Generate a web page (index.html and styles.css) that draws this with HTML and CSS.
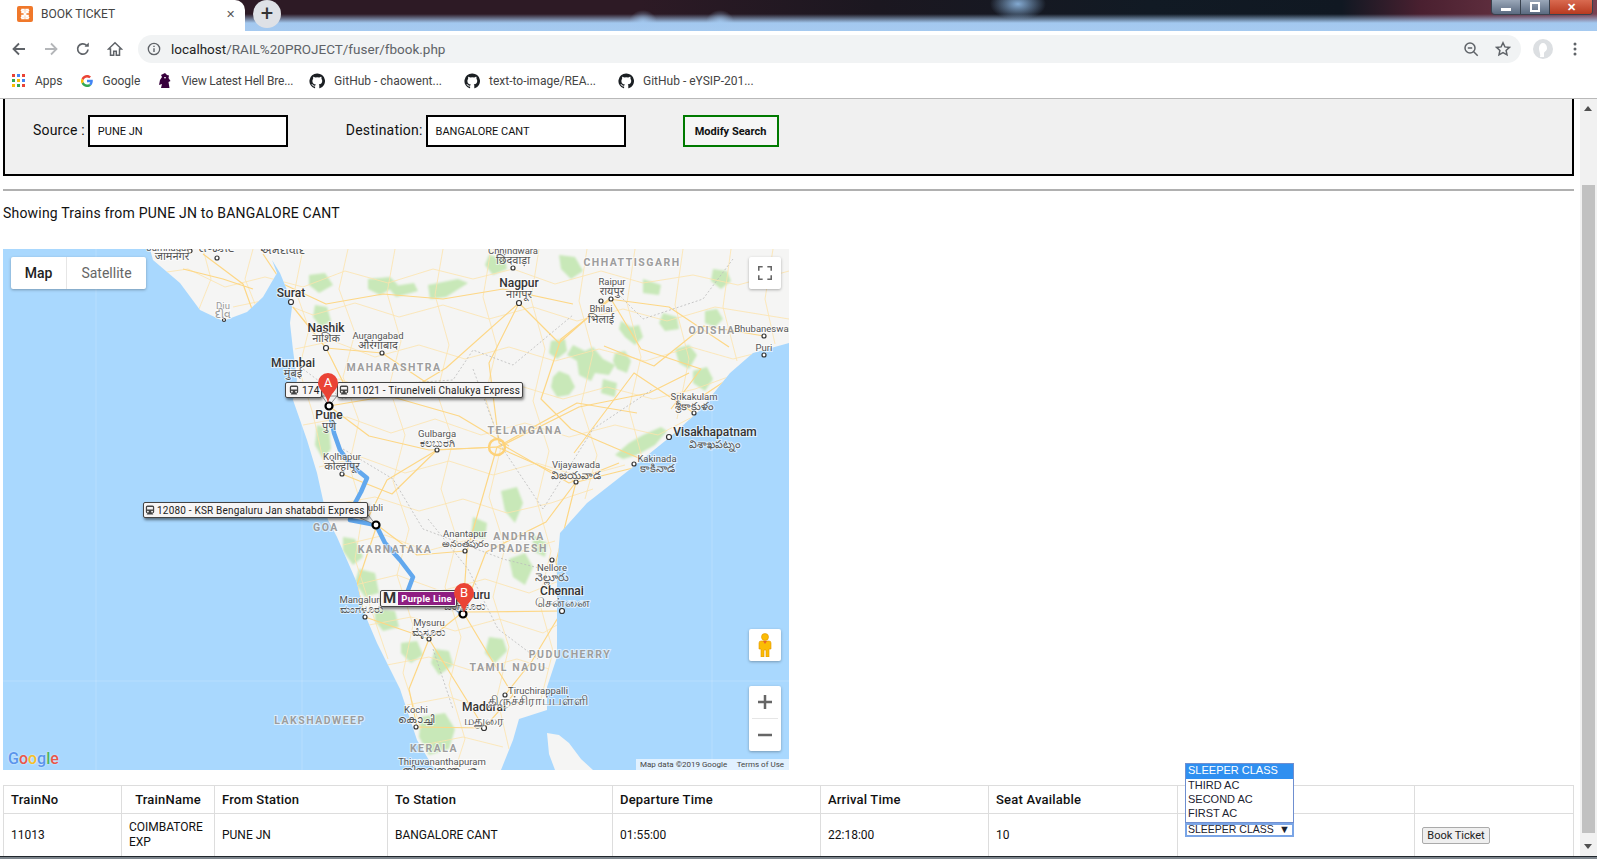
FILE: index.html
```html
<!DOCTYPE html>
<html lang="en">
<head>
  <meta charset="UTF-8" />
  <title>BOOK TICKET</title>
  <link rel="stylesheet" href="styles.css">
</head>
<body>
  <div class="tabstrip">
    <div class="tab">
      <svg class="favicon" viewBox="0 0 16 16"><rect width="16" height="16" rx="2" fill="#f0782a"/><path d="M4 4l8 8M12 4l-8 8M5 3.5h2v3H5zM9 3.5h2v3H9zM5 9.5h2v3H5zM9 9.5h2v3H9z" stroke="#fff" stroke-width="1.6" fill="none"/></svg>
      <span class="tab-title">BOOK TICKET</span>
      <span class="tab-close">&#10005;</span>
    </div>
    <div class="newtab">+</div>
    <div class="winbtns">
      <span class="winbtn"><i class="win-min"></i></span>
      <span class="winbtn"><i class="win-max"></i></span>
      <span class="winbtn win-close">&#10005;</span>
    </div>
  </div>

  <div class="toolbar">
    <div class="navs">
      <svg viewBox="0 0 16 16"><path d="M14 8H3M8 2.5L2.5 8 8 13.5" fill="none" stroke="#5f6368" stroke-width="1.8"/></svg>
      <svg viewBox="0 0 16 16"><path d="M2 8h11M8 2.5L13.5 8 8 13.5" fill="none" stroke="#b4b6b9" stroke-width="1.8"/></svg>
      <svg viewBox="0 0 16 16"><path d="M13 8.5a5.2 5.2 0 1 1-1.5-4.2" fill="none" stroke="#5f6368" stroke-width="1.7"/><path d="M13.8 1.5v4.3H9.5z" fill="#5f6368"/></svg>
      <svg viewBox="0 0 16 16"><path d="M8 1.8L1.5 8h2v6.2h3.200v-4h2.600v4h3.200V8h2z" fill="none" stroke="#5f6368" stroke-width="1.5"/></svg>
    </div>
    <div class="omnibox">
      <svg class="info" viewBox="0 0 16 16"><circle cx="8" cy="8" r="6.5" fill="none" stroke="#5f6368" stroke-width="1.5"/><path d="M8 7v4.5M8 4.3v1.5" stroke="#5f6368" stroke-width="1.6"/></svg>
      <span class="url"><b>localhost</b>/RAIL%20PROJECT/fuser/fbook.php</span>
      <svg class="omni-icon" viewBox="0 0 16 16"><circle cx="7" cy="7" r="5" fill="none" stroke="#5f6368" stroke-width="1.5"/><path d="M4.8 7h4.4M10.7 10.7l4 4" stroke="#5f6368" stroke-width="1.5"/></svg>
      <svg class="omni-icon" viewBox="0 0 16 16"><path d="M8 1.8l1.9 4.1 4.5.5-3.300 3 .9 4.400L8 11.600l-4 2.200.9-4.400-3.300-3 4.500-.5z" fill="none" stroke="#5f6368" stroke-width="1.5"/></svg>
    </div>
    <svg class="avatar" viewBox="0 0 20 20"><circle cx="10" cy="10" r="10" fill="#dcdfe2"/><path d="M7 18c1-3-1-5-1-9 0-3 2-5 4-5s4 2 4 5-2 3-3 5v4z" fill="#fff"/></svg>
    <svg class="menu" viewBox="0 0 4 16"><circle cx="2" cy="3" r="1.5" fill="#5f6368"/><circle cx="2" cy="8" r="1.5" fill="#5f6368"/><circle cx="2" cy="13" r="1.5" fill="#5f6368"/></svg>
  </div>

  <div class="bookmarks">
    <div class="bm bm-apps">
      <svg viewBox="0 0 14 14"><rect x="0" y="0" width="3" height="3" fill="#ea4335"/><rect x="5" y="0" width="3" height="3" fill="#4285f4"/><rect x="10" y="0" width="3" height="3" fill="#ea4335"/><rect x="0" y="5" width="3" height="3" fill="#34a853"/><rect x="5" y="5" width="3" height="3" fill="#fbbc05"/><rect x="10" y="5" width="3" height="3" fill="#4285f4"/><rect x="0" y="10" width="3" height="3" fill="#fbbc05"/><rect x="5" y="10" width="3" height="3" fill="#34a853"/><rect x="10" y="10" width="3" height="3" fill="#ea4335"/></svg>
      <span>Apps</span>
    </div>
    <div class="bm bm-google">
      <svg viewBox="0 0 14 14"><path d="M12.8 7.100c0-.5 0-.9-.1-1.300H7v2.500h3.300c-.2.800-.6 1.400-1.200 1.800l1.900 1.500c1.100-1 1.800-2.600 1.800-4.500z" fill="#4285f4"/><path d="M7 13c1.600 0 3-.5 4-1.500L9.100 10c-.5.400-1.200.6-2.100.6-1.600 0-2.900-1-3.400-2.500l-2 1.500C2.700 11.700 4.700 13 7 13z" fill="#34a853"/><path d="M3.600 8.100c-.2-.7-.2-1.500 0-2.200l-2-1.500c-.8 1.600-.8 3.600 0 5.200z" fill="#fbbc05"/><path d="M7 3.400c.9 0 1.700.3 2.300.9L11 2.600C10 1.600 8.600 1 7 1 4.700 1 2.700 2.300 1.600 4.400l2 1.500C4.100 4.400 5.400 3.400 7 3.400z" fill="#ea4335"/></svg>
      <span>Google</span>
    </div>
    <div class="bm bm-pl">
      <svg viewBox="0 0 14 16"><path d="M7 0l2 2 2 .5-.5 2.500 2 3-2 1 1 6H3l1-4-3 1 1-5 2-3-1-2z" fill="#38003c"/><path d="M6 4l2 0-1 2z" fill="#fff"/></svg>
      <span>View Latest Hell Bre...</span>
    </div>
    <div class="bm bm-gh">
      <svg viewBox="0 0 16 16"><path d="M8 .5a7.600 7.600 0 0 0-2.400 14.800c.4.100.5-.2.5-.4v-1.400c-2.100.5-2.600-.9-2.600-.9-.3-.9-.8-1.100-.8-1.100-.7-.5.100-.5.100-.5.800.1 1.200.8 1.200.8.700 1.200 1.800.8 2.300.6.100-.5.300-.8.500-1-1.700-.2-3.400-.8-3.400-3.700 0-.8.300-1.500.8-2-.1-.2-.3-1 .1-2 0 0 .6-.2 2.100.8a7.200 7.200 0 0 1 3.800 0c1.400-1 2.100-.8 2.100-.8.400 1 .2 1.800.1 2 .5.500.8 1.200.8 2 0 2.900-1.800 3.500-3.400 3.700.3.200.5.700.5 1.400v2.100c0 .2.100.5.500.4A7.600 7.600 0 0 0 8 .5z" fill="#1b1f23"/></svg>
      <span>GitHub - chaowent...</span>
    </div>
    <div class="bm bm-gh">
      <svg viewBox="0 0 16 16"><path d="M8 .5a7.600 7.600 0 0 0-2.400 14.800c.4.100.5-.2.5-.4v-1.400c-2.100.5-2.600-.9-2.600-.9-.3-.9-.8-1.100-.8-1.100-.7-.5.100-.5.100-.5.800.1 1.200.8 1.200.8.700 1.200 1.800.8 2.300.6.100-.5.300-.8.500-1-1.700-.2-3.400-.8-3.400-3.700 0-.8.300-1.500.8-2-.1-.2-.3-1 .1-2 0 0 .6-.2 2.100.8a7.200 7.200 0 0 1 3.800 0c1.400-1 2.100-.8 2.100-.8.400 1 .2 1.800.1 2 .5.500.8 1.200.8 2 0 2.900-1.800 3.500-3.400 3.700.3.200.5.700.5 1.400v2.100c0 .2.100.5.500.4A7.600 7.600 0 0 0 8 .5z" fill="#1b1f23"/></svg>
      <span>text-to-image/REA...</span>
    </div>
    <div class="bm bm-gh">
      <svg viewBox="0 0 16 16"><path d="M8 .5a7.600 7.600 0 0 0-2.400 14.800c.4.100.5-.2.5-.4v-1.400c-2.100.5-2.600-.9-2.600-.9-.3-.9-.8-1.100-.8-1.100-.7-.5.100-.5.100-.5.800.1 1.200.8 1.200.8.700 1.200 1.800.8 2.300.6.100-.5.300-.8.500-1-1.700-.2-3.400-.8-3.400-3.700 0-.8.300-1.500.8-2-.1-.2-.3-1 .1-2 0 0 .6-.2 2.100.8a7.200 7.200 0 0 1 3.800 0c1.400-1 2.100-.8 2.100-.8.400 1 .2 1.800.1 2 .5.500.8 1.200.8 2 0 2.900-1.800 3.500-3.400 3.700.3.200.5.700.5 1.400v2.100c0 .2.100.5.500.4A7.600 7.600 0 0 0 8 .5z" fill="#1b1f23"/></svg>
      <span>GitHub - eYSIP-201...</span>
    </div>
  </div>

  <div class="viewport">
    <div class="page">
      <div class="search-panel">
        <label class="field-label">Source :</label>
        <div class="field">PUNE JN</div>
        <label class="field-label dest-label">Destination:</label>
        <div class="field">BANGALORE CANT</div>
        <button class="modify-btn">Modify Search</button>
      </div>
      <hr class="rule">
      <p class="showing">Showing Trains from PUNE JN to BANGALORE CANT</p>

      <div class="map">
        <svg class="map-art" viewBox="0 0 786 521">
          <defs>
            <clipPath id="india"><path d="M147 0L150 11 177 34 197 61 220 72 244 63 260 48 274 24 269 11 277 24 284 41 289 58 287 74 290 101 294 131 290 151 304 191 314 224 320 251 325 271 334 288 344 311 354 334 360 361 374 394 397 440 414 491 430 518 440 521 498 521 510 491 516 470 544 461 544 438 554 408 554 361 554 318 557 284 584 254 630 218 667 188 697 161 727 124 750 104 786 94 786 0z"/></clipPath>
            <filter id="soft"><feGaussianBlur stdDeviation="0.8"/></filter>
          </defs>
          <rect width="786" height="521" fill="#a9d8fe"/>
          <path class="tiles" d="M93 0V521M299 0V521M0 432H786M709 0V521"/>
          <path class="land" d="M147 0L150 11 177 34 197 61 220 72 244 63 260 48 274 24 269 11 277 24 284 41 289 58 287 74 290 101 294 131 290 151 304 191 314 224 320 251 325 271 334 288 344 311 354 334 360 361 374 394 397 440 414 491 430 518 440 521 498 521 510 491 516 470 544 461 544 438 554 408 554 361 554 318 557 284 584 254 630 218 667 188 697 161 727 124 750 104 786 94 786 0z"/>
          <path class="land" d="M544 484L556 486 566 494 578 510 590 521 552 521 546 505z"/>
          <g clip-path="url(#india)">
            <g class="green" filter="url(#soft)">
              <path d="M570 96l12 6 8-4 10 12 12 6-6 10-14-2-4 8-12-6-2-14-10-6z"/>
              <path d="M556 122l10 4 6 12-6 8-12 2-6-10 2-10z"/>
              <path d="M548 92l14-2 2 12-10 8-8-6z"/>
              <path d="M612 104l10-2 6 10-4 12-10-4-4-8z"/>
              <path d="M618 72l10 6 8-2 4 12-8 8-10-8-6-8z"/>
              <path d="M702 62l12-2 6 10-8 8-10 -4z"/>
              <path d="M710 20l14 2 4 10-10 8-10-8z"/>
              <path d="M672 100l14-4 8 10-8 14-10-6z"/>
              <path d="M690 122l14-4 6 12-8 12-12-8z"/>
              <path d="M640 186l18-8 6 4-12 14-18 10-14 4-8-4 14-12z"/>
              <path d="M556 6l16 2 8 14-12 8-10-10z"/>
              <path d="M486 6l16 4 2 10-14 6-8-10z"/>
              <path d="M425 36l30-6 10 4-22 14-16 2z"/>
              <path d="M385 38l26-4 4 8-22 6z"/>
              <path d="M306 26l16-2 8 12-14 8-10-8z"/>
              <path d="M312 56l12 2 4 14-10 6-8-10z"/>
              <path d="M365 30l22-2 8 8-18 10-12-6z"/>
              <path d="M314 176l12 4 2 20-8 10-8-14z"/>
              <path d="M498 242l16-4 6 16-8 20-10-12z"/>
              <path d="M506 310l16-6 8 14-8 18-12-8z"/>
              <path d="M486 388l14 2 4 12-12 12-10-10z"/>
              <path d="M418 468l24-4 10 16-6 20-20 6-10-18z"/>
              <path d="M432 400l14 2 4 14-14 10-8-12z"/>
              <path d="M398 394l16-2 6 14-12 8-10-10z"/>
              <path d="M340 288l12 2 8 18-10 8-10-14z"/>
              <path d="M356 320l16 4 4 20-14 4-10-14z"/>
              <path d="M372 360l20 2 4 16-16 4-8-10z"/>
              <path d="M660 64l14 4 2 12-14 2-6-8z"/>
              <path d="M640 30l18 6-2 10-16-2z"/>
              <path d="M470 268l14 6-2 16-14-4z"/>
              <path d="M530 286l14 8-2 14-12-6z"/>
              <path d="M600 130l14 4-2 14-14-4z"/>
            </g>
            <g class="roads roads-thin">
              <path d="M150 25L185 20 222 38 262 28 300 38 342 22 385 34 430 20 470 30 510 20 552 35 598 22 640 34 690 26 735 36 786 22"/>
              <path d="M230 58L268 50 310 66 352 54 396 68 440 56 486 70 530 58 574 72 620 60 664 72 712 58 786 70"/>
              <path d="M292 100L330 92 372 108 416 96 462 110 506 98 552 112 596 100 642 112 688 98 730 110 770 100"/>
              <path d="M292 140L336 130 380 146 424 132 470 148 514 136 560 150 604 138 650 150 692 140 725 128"/>
              <path d="M300 176L344 168 388 184 432 170 478 186 522 174 566 188 612 176 655 186 695 165"/>
              <path d="M316 218L358 208 402 224 446 212 490 226 534 214 578 228 622 216"/>
              <path d="M328 256L372 248 416 262 460 250 504 264 548 254 590 240"/>
              <path d="M340 296L382 286 424 302 468 290 512 304 552 292"/>
              <path d="M352 336L394 326 438 342 482 330 526 344 556 332"/>
              <path d="M366 376L408 368 452 382 496 370 540 384 554 376"/>
              <path d="M384 416L426 408 470 422 514 410 546 420"/>
              <path d="M404 456L446 448 490 462 530 450"/>
              <path d="M420 496L460 488 500 498"/>
              <path d="M200 0L208 30 196 60M250 0L242 30 254 60"/>
              <path d="M300 0L292 40 306 80 296 120 310 165 322 220"/>
              <path d="M345 0L336 40 352 84 340 128 356 172 346 216 360 262 352 310 368 360 385 410"/>
              <path d="M392 0L384 44 398 92 386 138 402 186 390 232 406 280 394 326 410 376 400 424 418 480"/>
              <path d="M440 0L432 46 446 96 434 144 450 192 438 240 454 290 442 338 458 388 446 436 462 490 452 521"/>
              <path d="M488 0L480 48 494 98 482 148 498 198 486 248 502 298 490 348 506 398 494 448 506 500"/>
              <path d="M536 0L528 50 542 100 530 152 546 202 534 252 548 302 536 352 550 402 538 450"/>
              <path d="M584 0L576 52 590 104 578 156 594 206 582 250"/>
              <path d="M632 0L624 54 638 108 626 160 640 212"/>
              <path d="M680 0L672 56 686 110 674 170"/>
              <path d="M728 0L720 58 734 112M770 0L762 50 772 95"/>
            </g>
            <g class="roads">
              <path d="M180 20L220 30 250 40M200 5L240 35 250 63M260 5L280 35 323 55 380 45 440 50 500 40 570 55"/>
              <path d="M290 58L323 99 379 104 439 144 514 134"/>
              <path d="M323 99L343 139 393 149 443 119 516 54 556 94 606 50 666 58 726 98"/>
              <path d="M516 54L486 114 496 194 566 234 616 214"/>
              <path d="M326 157L386 147 456 167 506 197"/>
              <path d="M326 157L366 187 426 201 496 198 576 158 646 144 686 124"/>
              <path d="M608 50L638 100 698 120 668 160"/>
              <path d="M608 50L558 90 538 150 568 180 638 210"/>
              <path d="M494 198L434 201 384 231 364 271"/>
              <path d="M494 198L574 233 634 218"/>
              <path d="M494 198L464 302 460 362"/>
              <path d="M494 198L574 154 634 164"/>
              <path d="M573 233L543 273 483 303 460 363"/>
              <path d="M573 233L553 313 559 362"/>
              <path d="M460 363L559 362"/>
              <path d="M460 363L426 390 406 440 414 478"/>
              <path d="M460 363L490 413 510 446 481 479"/>
              <path d="M559 362L529 412 502 446"/>
              <path d="M339 225L389 245 434 201"/>
              <path d="M374 276L414 306 462 302"/>
              <path d="M374 276L354 336 362 368 426 390 481 479 413 478"/>
              <path d="M691 164L631 124 601 164 571 204"/>
              <path d="M761 106L701 146M761 87L701 77 651 117 601 97"/>
            </g>
            <path class="borders" d="M300 120L340 150 390 135 450 131 470 101 510 116 570 66M470 120L500 200 540 260 590 180 650 140M340 200L390 230 420 280 500 310 540 320M425 270L465 320 495 380 535 410M430 400L450 460M600 30L640 70 700 50 730 10"/>
            <circle class="city-ring" cx="494" cy="198" r="8"/>
          </g>
          <path class="route" d="M327 164L331 184 337 201 348 216 364 229 358 243 352 254 347 271 373 276 382 294 397 311 410 328 404 344 420 348 445 352 460 365"/>
          <path class="leader" d="M319 147L326 157 334 147z"/>
          <path class="leader" d="M355 268L373 276 362 262z"/>
          <path class="leader" d="M445 357L460 365 452 350z"/>
          <g class="dots">
            <circle cx="288" cy="53" r="2.5"/><circle cx="323" cy="99" r="2.5"/><circle cx="379" cy="104" r="2"/><circle cx="221" cy="71" r="1.5"/><circle cx="339" cy="225" r="2"/><circle cx="510" cy="19" r="2"/><circle cx="516" cy="54" r="2.5"/><circle cx="608" cy="50" r="2"/><circle cx="598" cy="52" r="2"/><circle cx="761" cy="87" r="2"/><circle cx="761" cy="106" r="2"/><circle cx="434" cy="201" r="2"/><circle cx="691" cy="164" r="2"/><circle cx="666" cy="188" r="2.5"/><circle cx="631" cy="215" r="2"/><circle cx="573" cy="233" r="2"/><circle cx="462" cy="302" r="2"/><circle cx="549" cy="311" r="2"/><circle cx="559" cy="362" r="2.5"/><circle cx="362" cy="368" r="2"/><circle cx="426" cy="390" r="2"/><circle cx="502" cy="446" r="2"/><circle cx="481" cy="479" r="2.5"/><circle cx="413" cy="478" r="2"/><circle cx="187" cy="2" r="2"/><circle cx="214" cy="9" r="2"/>
          </g>
          <g class="stops">
            <circle cx="326" cy="157" r="3.5"/><circle cx="373" cy="276" r="3.5"/><circle cx="460" cy="365" r="3.5"/>
          </g>
          <g class="place place-big">
            <text x="288" y="48">Surat</text><text x="323" y="83">Nashik</text><text x="290" y="118">Mumbai</text><text x="326" y="170">Pune</text><text x="516" y="38">Nagpur</text><text x="559" y="346">Chennai</text><text x="481" y="462">Madurai</text><text x="712" y="187">Visakhapatnam</text><text x="460" y="350">Bengaluru</text>
          </g>
          <g class="place">
            <text x="375" y="90">Aurangabad</text><text x="220" y="60" class="place-grey">Diu</text><text x="339" y="211">Kolhapur</text><text x="369" y="262">Hubli</text><text x="510" y="5">Chhindwara</text><text x="609" y="36">Raipur</text><text x="598" y="63">Bhilai</text><text x="760" y="83">Bhubaneswar</text><text x="761" y="102">Puri</text><text x="434" y="188">Gulbarga</text><text x="691" y="151">Srikakulam</text><text x="654" y="213">Kakinada</text><text x="573" y="219">Vijayawada</text><text x="462" y="288">Anantapur</text><text x="549" y="322">Nellore</text><text x="359" y="354">Mangaluru</text><text x="426" y="377">Mysuru</text><text x="535" y="445">Tiruchirappalli</text><text x="413" y="464">Kochi</text><text x="439" y="516">Thiruvananthapuram</text><text x="165" y="2">Jamnagar</text>
          </g>
          <g class="place place-native">
            <text x="323" y="93">नाशिक</text><text x="290" y="128">मुंबई</text><text x="375" y="100">औरंगाबाद</text><text x="326" y="181">पुणे</text><text x="339" y="221">कोल्हापूर</text><text x="510" y="15">छिंदवाड़ा</text><text x="516" y="49">नागपूर</text><text x="609" y="46">रायपुर</text><text x="598" y="74">भिलाई</text><text x="220" y="69" class="place-grey">દીવ</text><text x="434" y="198">ಕಲಬುರಗಿ</text><text x="691" y="161">శ్రీకాకుళం</text><text x="712" y="199">విశాఖపట్నం</text><text x="654" y="223">కాకినాడ</text><text x="573" y="230">విజయవాడ</text><text x="462" y="298" class="native-tight">అనంతపురం</text><text x="549" y="332">నెల్లూరు</text><text x="359" y="364">ಮಂಗಳೂರು</text><text x="426" y="387">ಮೈಸೂರು</text><text x="413" y="474">കൊച്ചി</text><text x="462" y="361">ಬೆಂಗಳೂರು</text><text x="169" y="11">जामनगर</text><text x="279" y="5">અમદાવાદ</text><text x="213" y="3">રાજકોટ</text><text x="439" y="525">തിരുവനന്തപുരം</text>
            <text x="559" y="358" class="tamil">சென்னை</text><text x="535" y="456" class="tamil">திருச்சிராப்பள்ளி</text><text x="481" y="476" class="tamil">மதுரை</text>
          </g>
          <g class="place place-state">
            <text x="391" y="122">MAHARASHTRA</text><text x="629" y="17">CHHATTISGARH</text><text x="709" y="85">ODISHA</text><text x="522" y="185">TELANGANA</text><text x="323" y="282">GOA</text><text x="392" y="304">KARNATAKA</text><text x="516" y="291">ANDHRA</text><text x="516" y="303">PRADESH</text><text x="567" y="409">PUDUCHERRY</text><text x="505" y="422">TAMIL NADU</text><text x="431" y="503">KERALA</text><text x="317" y="475">LAKSHADWEEP</text>
          </g>
        </svg>

        <div class="map-label label-174"><svg class="tram" viewBox="0 0 12 12"><path d="M3 .5h6a2 2 0 0 1 2 2V8a2 2 0 0 1-2 2l1 1.500H2L3 10a2 2 0 0 1-2-2V2.500a2 2 0 0 1 2-2zM2.500 2.500V5.500h7V2.500zM3.500 7a1 1 0 1 0 .01 0M8.500 7a1 1 0 1 0 .01 0" fill="#444" fill-rule="evenodd"/></svg>174</div>
        <div class="map-label label-11021"><svg class="tram" viewBox="0 0 12 12"><path d="M3 .5h6a2 2 0 0 1 2 2V8a2 2 0 0 1-2 2l1 1.500H2L3 10a2 2 0 0 1-2-2V2.500a2 2 0 0 1 2-2zM2.500 2.500V5.500h7V2.500zM3.500 7a1 1 0 1 0 .01 0M8.500 7a1 1 0 1 0 .01 0" fill="#444" fill-rule="evenodd"/></svg>11021 - Tirunelveli Chalukya Express</div>
        <div class="map-label label-12080"><svg class="tram" viewBox="0 0 12 12"><path d="M3 .5h6a2 2 0 0 1 2 2V8a2 2 0 0 1-2 2l1 1.500H2L3 10a2 2 0 0 1-2-2V2.500a2 2 0 0 1 2-2zM2.500 2.500V5.500h7V2.500zM3.500 7a1 1 0 1 0 .01 0M8.500 7a1 1 0 1 0 .01 0" fill="#444" fill-rule="evenodd"/></svg>12080 - KSR Bengaluru Jan shatabdi Express</div>
        <div class="map-label label-metro"><b class="metro-m">M</b><span class="metro-line">Purple Line</span></div>

        <svg class="pin pin-a" viewBox="0 0 22 30"><path d="M11 0a10 10 0 0 1 10 10c0 7-8 10-10 20C9 20 1 17 1 10A10 10 0 0 1 11 0z" fill="#ea4335"/><text x="11" y="14" class="pin-text">A</text></svg>
        <svg class="pin pin-b" viewBox="0 0 22 30"><path d="M11 0a10 10 0 0 1 10 10c0 7-8 10-10 20C9 20 1 17 1 10A10 10 0 0 1 11 0z" fill="#ea4335"/><text x="11" y="14" class="pin-text">B</text></svg>

        <div class="map-type"><span class="type-map">Map</span><span class="type-sat">Satellite</span></div>
        <div class="map-btn fullscreen"><svg viewBox="0 0 18 18"><path d="M1 6V1h5M12 1h5v5M17 12v5h-5M6 17H1v-5" fill="none" stroke="#666" stroke-width="2"/></svg></div>
        <div class="map-btn pegman"><svg viewBox="0 0 14 24"><circle cx="7" cy="4" r="3.5" fill="#fbbc05" stroke="#e09500" stroke-width=".6"/><path d="M3 8h8a2 2 0 0 1 2 2v6h-2v8H8v-7H6v7H3v-8H1v-6a2 2 0 0 1 2-2z" fill="#fbbc05" stroke="#e09500" stroke-width=".6"/><path d="M5 8l2 3 2-3z" fill="#e8622a"/></svg></div>
        <div class="zoom-ctl">
          <div class="zoom-btn"><svg viewBox="0 0 14 14"><path d="M0 7h14M7 0v14" stroke="#666" stroke-width="2.5"/></svg></div>
          <div class="zoom-btn"><svg viewBox="0 0 14 14"><path d="M0 7h14" stroke="#666" stroke-width="2.5"/></svg></div>
        </div>
        <div class="google-logo"><span class="g-b">G</span><span class="g-r">o</span><span class="g-y">o</span><span class="g-b">g</span><span class="g-g">l</span><span class="g-r">e</span></div>
        <div class="attribution"><span>Map data ©2019 Google</span><span>Terms of Use</span></div>
      </div>

      <table class="trains">
        <tr>
          <th class="col-no">TrainNo</th>
          <th class="col-name">TrainName</th>
          <th class="col-from">From Station</th>
          <th class="col-to">To Station</th>
          <th class="col-dep">Departure Time</th>
          <th class="col-arr">Arrival Time</th>
          <th class="col-seat">Seat Available</th>
          <th class="col-class"></th>
          <th class="col-book"></th>
        </tr>
        <tr>
          <td>11013</td>
          <td>COIMBATORE EXP</td>
          <td>PUNE JN</td>
          <td>BANGALORE CANT</td>
          <td>01:55:00</td>
          <td>22:18:00</td>
          <td>10</td>
          <td>
            <div class="select-box">
              <ul class="select-list">
                <li class="is-active">SLEEPER CLASS</li>
                <li>THIRD AC</li>
                <li>SECOND AC</li>
                <li>FIRST AC</li>
              </ul>
              <span>SLEEPER CLASS</span><span class="select-arrow">&#9660;</span>
            </div>
          </td>
          <td><button class="book-btn">Book Ticket</button></td>
        </tr>
      </table>
    </div>
    <div class="scrollbar">
      <span class="arrow-up"></span>
      <div class="thumb"></div>
      <span class="arrow-down"></span>
    </div>
  </div>
  <div class="taskbar"></div>
</body>
</html>
```

FILE: styles.css
```css
html, body {
  margin: 0;
  height: 859px;
  overflow: hidden;
}

body {
  display: flex;
  flex-direction: column;
  font-family: Roboto, sans-serif;
  color: #111;
  background: #fff;
}

/* browser chrome */
.tabstrip {
  height: 31px;
  display: flex;
  flex-shrink: 0;
  position: relative;
  background:
    radial-gradient(ellipse 14px 12px at 643px 22px, rgba(163,201,240,.8), rgba(163,201,240,0)),
    radial-gradient(ellipse 14px 12px at 720px 22px, rgba(163,201,240,.8), rgba(163,201,240,0)),
    radial-gradient(ellipse 28px 16px at 1018px 4px, rgba(150,195,240,.85), rgba(150,195,240,0)),
    linear-gradient(to bottom, rgba(163,201,240,0) 0, rgba(163,201,240,0) 14px, #a3c8ef 23px, #a6caf0 31px),
    linear-gradient(to right, #2d1a25 0, #2d1a25 40%, #1b1720 55%, #111a24 72%, #101822 84%, #4a2030 89%, #7a4050 100%);
}

.tab {
  width: 245px;
  height: 31px;
  background: #fff;
  border-radius: 0 10px 0 0;
  display: flex;
  align-items: center;
  box-sizing: border-box;
  padding: 0 0 3px 17px;
}

.favicon {
  width: 16px;
  height: 16px;
}

.tab-title {
  margin-left: 8px;
  font-size: 12px;
  color: #444;
  flex: 1;
}

.tab-close {
  font-size: 11px;
  color: #555;
  margin-right: 10px;
}

.newtab {
  width: 28px;
  height: 28px;
  margin-left: 8px;
  border-radius: 50%;
  background: #dee1e6;
  color: #333;
  font-size: 22px;
  line-height: 27px;
  text-align: center;
}

.winbtns {
  position: absolute;
  top: 0;
  right: 4px;
  height: 15px;
  width: 102px;
  display: flex;
  border: 1px solid #39424e;
  border-top: 0;
  border-radius: 0 0 4px 4px;
  box-sizing: border-box;
  overflow: hidden;
}

.winbtn {
  width: 28px;
  background: linear-gradient(#9aa7b8, #5a6a80);
  border-right: 1px solid #39424e;
  display: flex;
  align-items: center;
  justify-content: center;
}

.win-close {
  flex: 1;
  background: linear-gradient(#d96a50, #b83a20);
  border-right: 0;
  color: #fff;
  font-size: 11px;
  font-weight: bold;
}

.win-min {
  width: 10px;
  height: 3px;
  margin-top: 5px;
  background: #fff;
}

.win-max {
  width: 6px;
  height: 6px;
  border: 2px solid #fff;
}

.toolbar {
  height: 35px;
  flex-shrink: 0;
  display: flex;
  align-items: center;
  background: #fff;
  box-sizing: border-box;
  padding: 4px 0 3px;
}

.navs {
  width: 138px;
  display: flex;
  gap: 16px;
  padding-left: 11px;
  box-sizing: border-box;
}

.navs svg {
  width: 16px;
  height: 16px;
}

.omnibox {
  width: 1383px;
  height: 28px;
  border-radius: 14px;
  background: #f1f3f4;
  display: flex;
  align-items: center;
  padding: 0 10px 0 9px;
  box-sizing: border-box;
  gap: 16px;
}

.info {
  width: 14px;
  height: 14px;
  margin-right: -6px;
}

.url {
  flex: 1;
  font-size: 13.5px;
  color: #5f6368;
}

.url b {
  font-weight: 400;
  color: #222;
}

.omni-icon {
  width: 16px;
  height: 16px;
}

.avatar {
  width: 20px;
  height: 20px;
  margin-left: 12px;
}

.menu {
  width: 4px;
  height: 16px;
  margin-left: 20px;
}

.bookmarks {
  height: 33px;
  flex-shrink: 0;
  display: flex;
  align-items: center;
  padding: 0 0 2px 12px;
  box-sizing: border-box;
  border-bottom: 1px solid #b9b9b9;
  font-size: 12px;
  color: #444;
}

.bm {
  display: flex;
  align-items: center;
  gap: 9px;
}

.bm svg {
  width: 14px;
  height: 14px;
  flex-shrink: 0;
}

.bm-google {
  margin-left: 17px;
}

.bm-pl {
  margin-left: 18px;
}

.bm-pl svg {
  height: 16px;
}

.bm-pl span {
  letter-spacing: -.2px;
}

.bm-gh {
  margin-left: 22px;
}

.bm-gh svg {
  width: 16px;
  height: 16px;
}

.bm-pl + .bm-gh {
  margin-left: 16px;
}

/* page */
.viewport {
  flex: 1;
  min-height: 0;
  display: flex;
}

.page {
  flex: 1;
  min-width: 0;
  padding-left: 3px;
  padding-right: 6px;
  overflow: hidden;
}

.scrollbar {
  width: 17px;
  background: #f1f1f1;
  position: relative;
  flex-shrink: 0;
}

.thumb {
  position: absolute;
  top: 86px;
  bottom: 23px;
  left: 2px;
  right: 2px;
  background: #c1c1c1;
}

.arrow-up {
  position: absolute;
  top: 7px;
  left: 4px;
  border: 4px solid transparent;
  border-top: 0;
  border-bottom: 5px solid #505050;
}

.arrow-down {
  position: absolute;
  bottom: 7px;
  left: 4px;
  border: 4px solid transparent;
  border-bottom: 0;
  border-top: 5px solid #505050;
}

.search-panel {
  height: 59px;
  background: #f0f0f0;
  border: 2px solid #000;
  border-top: 0;
  display: flex;
  align-items: flex-start;
  padding: 16px 0 0 28px;
  font-size: 14px;
  letter-spacing: .2px;
}

.field-label {
  line-height: 30px;
}

.field {
  width: 200px;
  height: 32px;
  box-sizing: border-box;
  margin-left: 3px;
  border: 2px solid #000;
  background: #fff;
  font-size: 11px;
  letter-spacing: 0;
  line-height: 29px;
  padding-left: 8px;
}

.dest-label {
  margin-left: 58px;
}

.modify-btn {
  width: 96px;
  height: 32px;
  margin-left: 57px;
  border: 2px solid #007a00;
  background: #f6f6f6;
  font: bold 11px Roboto, sans-serif;
  color: #111;
  padding: 0;
}

.rule {
  margin: 13px 0 0;
  height: 0;
  border: 0;
  border-top: 2px solid #b0b0b0;
}

.showing {
  margin: 0;
  padding: 13px 0 27px;
  font-size: 14px;
  letter-spacing: .2px;
  line-height: 18px;
}

/* google map */
.map {
  width: 786px;
  height: 521px;
  position: relative;
  overflow: hidden;
}

.map-art {
  display: block;
  width: 786px;
  height: 521px;
}

.land {
  fill: #f5f5f4;
}

.tiles {
  fill: none;
  stroke: rgba(255, 255, 255, .18);
}

.green path {
  fill: #c8e8b8;
}

.roads path {
  fill: none;
  stroke: #fdd786;
  stroke-width: 1.2;
  stroke-linejoin: round;
}

.roads-thin path {
  stroke: #fce3ac;
  stroke-width: .8;
}

.city-ring {
  fill: none;
  stroke: #fdd27a;
  stroke-width: 2.5;
}

.borders {
  fill: none;
  stroke: #bbb;
  stroke-width: .8;
  stroke-dasharray: 2 2;
}

.route {
  fill: none;
  stroke: #62a8ee;
  stroke-width: 4.5;
  stroke-linejoin: round;
}

.leader {
  fill: #eee;
  stroke: #666;
  stroke-width: .7;
}

.dots circle {
  fill: #fff;
  stroke: #333;
  stroke-width: 1.2;
}

.stops circle {
  fill: #fff;
  stroke: #000;
  stroke-width: 2.2;
}

.place text {
  font-family: Roboto, sans-serif;
  font-size: 9.5px;
  fill: #555;
  text-anchor: middle;
  paint-order: stroke;
  stroke: #fff;
  stroke-width: 2px;
  stroke-opacity: .6;
}

.place-big text {
  font-size: 12px;
  font-weight: 500;
  fill: #333;
}

.place .place-grey {
  fill: #999;
}

.place-native text {
  font-family: "Noto Sans", "DejaVu Sans", sans-serif;
  font-size: 11px;
}

.place-native .native-tight {
  font-size: 9.5px;
}

.place-native .tamil {
  font-size: 13px;
}

.place-state text {
  font-size: 10.5px;
  font-weight: 700;
  letter-spacing: 1.5px;
  fill: #9d9d9d;
}

.map-label {
  position: absolute;
  height: 16px;
  box-sizing: border-box;
  display: flex;
  align-items: center;
  gap: 2px;
  padding: 0 1px;
  background: #f7f5f5;
  border: 1px solid #444;
  border-radius: 2px;
  box-shadow: 1px 2px 3px rgba(0, 0, 0, .5);
  font-size: 10px;
  letter-spacing: .2px;
  color: #222;
  white-space: nowrap;
}

.tram {
  width: 10px;
  height: 10px;
  flex-shrink: 0;
}

.label-174 {
  left: 282px;
  top: 133px;
  width: 37px;
  padding-left: 3px;
  gap: 3px;
}

.label-11021 {
  left: 334px;
  top: 133px;
  width: 186px;
}

.label-12080 {
  left: 140px;
  top: 253px;
  width: 225px;
}

.label-metro {
  left: 377px;
  top: 341px;
  width: 77px;
  height: 17px;
  padding: 0 2px;
}

.metro-m {
  font-size: 15px;
  color: #333;
  line-height: 15px;
}

.metro-line {
  background: #8f1e82;
  color: #fff;
  font-size: 9.5px;
  font-weight: 700;
  padding: 0 3px;
  line-height: 13px;
}

.pin {
  position: absolute;
  width: 22px;
  height: 30px;
}

.pin-a {
  left: 314px;
  top: 124px;
}

.pin-b {
  left: 450px;
  top: 334px;
}

.pin-text {
  font-family: Roboto, sans-serif;
  font-size: 13px;
  fill: #fff;
  text-anchor: middle;
}

.map-type {
  position: absolute;
  left: 8px;
  top: 8px;
  width: 135px;
  height: 32px;
  display: flex;
  background: #fff;
  border-radius: 2px;
  box-shadow: 0 1px 3px rgba(0, 0, 0, .3);
  font-size: 14px;
  line-height: 32px;
  text-align: center;
}

.type-map {
  width: 55px;
  font-weight: 500;
  color: #222;
  border-right: 1px solid #e6e6e6;
}

.type-sat {
  flex: 1;
  color: #666;
}

.map-btn {
  position: absolute;
  left: 746px;
  width: 32px;
  height: 32px;
  background: #fff;
  border-radius: 2px;
  box-shadow: 0 1px 3px rgba(0, 0, 0, .3);
  display: flex;
  align-items: center;
  justify-content: center;
}

.fullscreen {
  top: 8px;
}

.fullscreen svg {
  width: 14px;
  height: 14px;
}

.pegman {
  top: 380px;
}

.pegman svg {
  width: 14px;
  height: 24px;
}

.zoom-ctl {
  position: absolute;
  left: 746px;
  top: 437px;
  width: 32px;
  height: 65px;
  background: #fff;
  border-radius: 2px;
  box-shadow: 0 1px 3px rgba(0, 0, 0, .3);
}

.zoom-btn {
  height: 32px;
  display: flex;
  align-items: center;
  justify-content: center;
}

.zoom-btn + .zoom-btn {
  margin: 0 3px;
  border-top: 1px solid #e6e6e6;
}

.zoom-btn svg {
  width: 14px;
  height: 14px;
}

.google-logo {
  position: absolute;
  left: 5px;
  bottom: 2px;
  font-family: Roboto, sans-serif;
  font-size: 16px;
  font-weight: 500;
  line-height: 19px;
  text-shadow: 0 0 2px rgba(255, 255, 255, .8);
}

.g-b { color: #5a95ec; }
.g-r { color: #e8564a; }
.g-y { color: #f4bf2a; }
.g-g { color: #4cb45c; }

.attribution {
  position: absolute;
  right: 0;
  bottom: 0;
  width: 153px;
  height: 11px;
  display: flex;
  justify-content: space-between;
  padding: 0 5px 0 4px;
  box-sizing: border-box;
  background: rgba(255, 255, 255, .65);
  font-size: 8px;
  line-height: 11px;
  color: #444;
}

/* results table */
.trains {
  width: 1570px;
  margin-top: 15px;
  border-collapse: collapse;
  table-layout: fixed;
  font-size: 12px;
}

.trains th,
.trains td {
  box-sizing: border-box;
  border: 1px solid #ddd;
  padding: 0 7px;
  text-align: left;
}

.trains th {
  height: 28px;
  font-size: 13px;
  font-weight: 500;
  letter-spacing: .2px;
}

.trains td {
  height: 43px;
  line-height: 15px;
}

.col-no { width: 118px; }
.col-from { width: 173px; }
.col-to { width: 225px; }
.col-dep { width: 208px; }
.col-arr { width: 168px; }
.col-seat { width: 189px; }
.col-class { width: 237px; }
.col-book { width: 159px; }

.trains .col-name {
  width: 93px;
  text-align: center;
}

.select-box {
  width: 109px;
  height: 14px;
  margin-bottom: 11px;
  border: 2px solid #7aa5e6;
  display: flex;
  justify-content: space-between;
  align-items: center;
  box-sizing: border-box;
  padding: 0 2px 0 1px;
  position: relative;
  font-family: "Liberation Sans", sans-serif;
  font-size: 10.5px;
  background: #fff;
  color: #1c2230;
}

.select-arrow {
  font-size: 11px;
}

.select-list {
  position: absolute;
  left: -2px;
  right: -2px;
  bottom: 100%;
  margin: 0 0 2px;
  padding: 0;
  list-style: none;
  background: #fff;
  border: 1px solid #6f8fd0;
  font-size: 11px;
}

.select-list li {
  height: 14.3px;
  line-height: 13px;
  padding-left: 2px;
}

.select-list .is-active {
  background: #2f8ff0;
  color: #fff;
}

.book-btn {
  width: 68px;
  height: 17px;
  padding: 0;
  background: #efefef;
  border: 1px solid #aaa;
  border-radius: 2px;
  font: 11px Roboto, sans-serif;
  color: #222;
}

.taskbar {
  height: 3px;
  flex-shrink: 0;
  background: linear-gradient(#20262c 1px, #7d858c 1px);
}
```
